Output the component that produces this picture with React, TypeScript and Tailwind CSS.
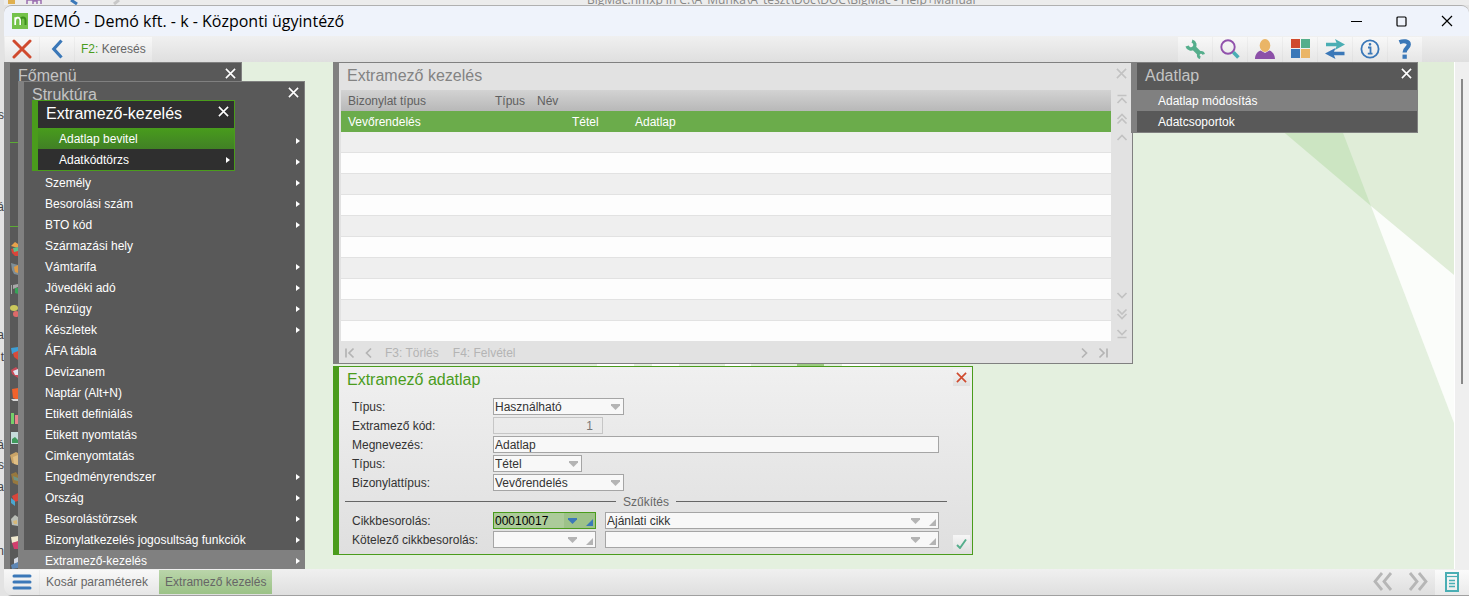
import type { ReactNode } from "react";

type MenuItem = { label: string; arrow?: boolean; active?: boolean };

const STRUCTURE_MENU: MenuItem[] = [
  { label: "Személy", arrow: true },
  { label: "Besorolási szám", arrow: true },
  { label: "BTO kód", arrow: true },
  { label: "Származási hely" },
  { label: "Vámtarifa", arrow: true },
  { label: "Jövedéki adó", arrow: true },
  { label: "Pénzügy", arrow: true },
  { label: "Készletek", arrow: true },
  { label: "ÁFA tábla" },
  { label: "Devizanem" },
  { label: "Naptár (Alt+N)" },
  { label: "Etikett definiálás" },
  { label: "Etikett nyomtatás" },
  { label: "Cimkenyomtatás" },
  { label: "Engedményrendszer", arrow: true },
  { label: "Ország", arrow: true },
  { label: "Besorolástörzsek", arrow: true },
  { label: "Bizonylatkezelés jogosultság funkciók", arrow: true },
  { label: "Extramező-kezelés", arrow: true, active: true },
];

// text of the document that lies behind the application window
const BEHIND_TEXT = [
  { y: 107, text: "s" },
  { y: 199, text: "á" },
  { y: 327, text: "a" },
  { y: 349, text: "t" },
  { y: 437, text: "á" },
  { y: 457, text: "s" },
  { y: 479, text: "a" },
  { y: 543, text: "n" },
];

function CrossIcon({ size = 11, width = 1.7 }: { size?: number; width?: number }) {
  return (
    <svg width={size} height={size} viewBox="0 0 12 12" fill="none" stroke="currentColor" strokeWidth={width}>
      <path d="M1 1L11 11M11 1L1 11" />
    </svg>
  );
}

function Arrow() {
  return (
    <svg width="4" height="6" viewBox="0 0 4 6" fill="#fff">
      <path d="M0 0L4 3L0 6Z" />
    </svg>
  );
}

function GhostButton({ label, d }: { label: string; d: string }) {
  return (
    <button type="button" aria-label={label} className="flex h-[19px] w-[19px] items-center justify-center">
      <svg width="12" height="12" viewBox="0 0 12 12" fill="none" stroke="currentColor" strokeWidth="1.7">
        <path d={d} />
      </svg>
    </button>
  );
}

function ToolButton({ label, children }: { label: string; children: ReactNode }) {
  return (
    <button
      type="button"
      aria-label={label}
      className="flex w-[34px] items-center justify-center bg-linear-to-b from-[#f8f8f8] to-[#e6e6e6] pb-0.5"
    >
      {children}
    </button>
  );
}

function MenuRow({ item, className }: { item: MenuItem; className: string }) {
  return (
    <button type="button" className={`flex h-[21px] w-full shrink-0 items-center text-left ${className}`}>
      <span className="flex-1 whitespace-nowrap">{item.label}</span>
      {item.arrow && <Arrow />}
    </button>
  );
}

function TitleBar() {
  return (
    <header className="flex h-[30px] shrink-0 items-center bg-[#eff3fb] pl-2">
      <svg width="16" height="16" viewBox="0 0 16 16" className="mr-[5px]">
        <rect width="16" height="16" fill="#74c24a" />
        <path d="M8.500 12V7.500C8.500 3.500 13.500 3.500 13.500 7.500V12" fill="none" stroke="#3c8f1c" strokeWidth="2" />
        <path d="M3.200 12V4.200M3.200 8C3.200 3.500 8.200 3.500 8.200 7.500V12" fill="none" stroke="#fff" strokeWidth="1.700" />
      </svg>
      <h1 className="flex-1 font-['Open_Sans','Noto_Sans',sans-serif] text-[16px] leading-6 text-black">
        DEMÓ - Demó kft. - k - Központi ügyintéző
      </h1>
      <div className="flex text-black">
        <button type="button" aria-label="Kis méret" className="flex h-[30px] w-[45px] items-center justify-center">
          <svg width="11" height="11" viewBox="0 0 11 11" stroke="currentColor">
            <path d="M0 5.500H11" />
          </svg>
        </button>
        <button type="button" aria-label="Teljes méret" className="flex h-[30px] w-[45px] items-center justify-center">
          <svg width="11" height="11" viewBox="0 0 11 11" fill="none" stroke="currentColor" strokeWidth="1.200">
            <rect x="1" y="1" width="9" height="9" rx="1" />
          </svg>
        </button>
        <button type="button" aria-label="Bezárás" className="flex h-[30px] w-[45px] items-center justify-center">
          <CrossIcon size={12} width={1.2} />
        </button>
      </div>
    </header>
  );
}

function Toolbar() {
  return (
    <div className="flex h-[26px] shrink-0 justify-between bg-linear-to-b from-[#f0f0f0] to-[#dfdfdf] pt-px pr-[47px]">
      <div className="flex gap-px pl-px">
        <ToolButton label="Kilépés">
          <svg width="20" height="20" viewBox="0 0 20 20" stroke="#d04a2e" strokeWidth="3" strokeLinecap="round">
            <path d="M2 2L18 18M18 2L2 18" />
          </svg>
        </ToolButton>
        <ToolButton label="Vissza">
          <svg width="12" height="20" viewBox="0 0 12 20" fill="none" stroke="#3b78b8" strokeWidth="3.200">
            <path d="M10.500 1.500L2.800 10L10.500 18.500" />
          </svg>
        </ToolButton>
        <button
          type="button"
          className="bg-linear-to-b from-[#f8f8f8] to-[#e6e6e6] px-1.5 pb-0.5 text-[#666]"
        >
          <span className="text-[#4a9c1c]">F2:</span> Keresés
        </button>
      </div>
      <div className="flex gap-px">
        <ToolButton label="Beállítások">
          <svg width="20" height="20" viewBox="0 0 20 20" fill="none" stroke="#55ae8c">
            <path d="M7 2.100A4 4 0 1 1 2.100 7" strokeWidth="3.400" />
            <path d="M8 8L14.500 14.500" strokeWidth="4.600" />
            <path d="M18.600 15.300A2.700 2.700 0 1 0 15.300 18.600" strokeWidth="2.800" />
          </svg>
        </ToolButton>
        <ToolButton label="Nagyító">
          <svg width="20" height="20" viewBox="0 0 20 20" fill="none">
            <circle cx="8" cy="8" r="6.700" stroke="#9152ac" strokeWidth="1.900" />
            <path d="M13.300 13.300L18.400 18.400" stroke="#4aaeb4" strokeWidth="3.600" />
          </svg>
        </ToolButton>
        <ToolButton label="Felhasználó">
          <svg width="20" height="20" viewBox="0 0 20 20">
            <path d="M0 20C0 15 3 12.500 5.500 11.500L10 14L14.500 11.500C17 12.500 20 15 20 20Z" fill="#8c50a8" />
            <ellipse cx="10" cy="6.500" rx="5.300" ry="6.500" fill="#eab566" />
          </svg>
        </ToolButton>
        <ToolButton label="Modulok">
          <svg width="19" height="19" viewBox="0 0 19 19">
            <rect width="9" height="9" fill="#d04a2e" />
            <rect x="10" width="9" height="9" fill="#55ae8c" />
            <rect y="10" width="9" height="9" fill="#3b78b8" />
            <rect x="10" y="10" width="9" height="9" fill="#eab566" />
          </svg>
        </ToolButton>
        <ToolButton label="Váltás">
          <svg width="20" height="20" viewBox="0 0 20 20">
            <path d="M1 3.800H11.500L10 0L20 5.500L10 11L11.500 7.200H1Z" fill="#4aaeb4" />
            <path d="M19.500 12.800H9L10.500 9L0 14.500L10.500 20L9 16.200H19.500Z" fill="#3b78b8" />
          </svg>
        </ToolButton>
        <ToolButton label="Információ">
          <svg width="20" height="20" viewBox="0 0 20 20" fill="none" stroke="#3b78b8">
            <circle cx="10" cy="10" r="8.600" strokeWidth="1.800" />
            <path d="M8 8.500H10.500V14.500M7.800 14.700H12.500" strokeWidth="1.800" />
            <circle cx="10" cy="5.300" r="0.700" strokeWidth="1.300" />
          </svg>
        </ToolButton>
        <ToolButton label="Súgó">
          <svg width="14" height="20" viewBox="0 0 14 20">
            <path
              d="M1.500 3.200C5.500 1.500 10.800 2 10.800 5.600C10.800 8.800 6.600 8.800 6.600 13.600"
              fill="none"
              stroke="#3b78b8"
              strokeWidth="4.200"
            />
            <rect x="4.500" y="15.600" width="4.300" height="4.200" fill="#3b78b8" />
          </svg>
        </ToolButton>
      </div>
    </div>
  );
}

function Backdrop() {
  return (
    <svg width="253" height="361" viewBox="0 0 253 361" className="absolute top-0 right-0">
      <path d="M115 0H253V213L170 144Z" fill="#e0edd8" />
      <path d="M0 0H115L170 144Z" fill="#cce5c2" />
      <path d="M170 144L253 213V361Z" fill="#fbfdfa" />
    </svg>
  );
}

function LogoEdge() {
  return (
    <svg width="284" height="2" viewBox="0 0 284 2" className="absolute top-[302px] left-[593px]">
      <path d="M0 0H37V2H0ZM55 0H82V2H55ZM128 0H154V2H128ZM245 0H283V2H245Z" fill="#fff" />
      <path d="M200 0H227V2H200Z" fill="#9bca80" />
    </svg>
  );
}

// left half of the module icons, the rest is covered by the next menu level
function ModuleIcons() {
  return (
    <svg width="8" height="507" viewBox="0 0 8 507">
      <path d="M0 79.500H8M0 163.500H8" stroke="#5cab35" />
      <path d="M1 183L5 179L8 181V185Z" fill="#e8a24c" />
      <path d="M1 186L8 184V193L5 193L2 190Z" fill="#d9453a" />
      <path d="M3 185L8 184V188L4 189Z" fill="#5fc08a" />
      <path d="M1 200L8 202V212L4 211L2 207Z" fill="#7f8f98" />
      <path d="M4 204L8 202V210L5 209Z" fill="#dd9a45" />
      <path d="M1 222H2V231H1ZM3 222L8 221V224L3 226Z" fill="#a8a8a8" />
      <path d="M5 225H8V231L5 230Z" fill="#37a357" />
      <ellipse cx="4" cy="245" rx="4" ry="3" fill="#cbc85c" />
      <ellipse cx="6" cy="251" rx="3" ry="3" fill="#dd6a6a" />
      <path d="M1 285L8 284V289L2 291Z" fill="#3d9fd6" />
      <path d="M3 290L8 288V297L4 294Z" fill="#d84b3a" />
      <path d="M1 307L6 304L8 306V315L2 311Z" fill="#c94a57" />
      <path d="M3 308L8 306V312L5 312Z" fill="#dfe4ee" />
      <path d="M2 326L8 325V337L3 335Z" fill="#f0622c" />
      <path d="M1 336H8V338H3Z" fill="#d8d8d8" />
      <path d="M1 350H4V361H1Z" fill="#74cf6a" />
      <path d="M5 352H8V361H5Z" fill="#e8848c" />
      <path d="M1 369H8V381H1Z" fill="#c7dcdc" />
      <path d="M2 376L5 374L8 377V380H2Z" fill="#3f9a5c" />
      <path d="M0 392L6 389L8 390V402L2 400Z" fill="#c9a468" />
      <path d="M3 394L8 392V402L4 401Z" fill="#e0bf84" />
      <path d="M1 411L6 409L8 412V422L3 420Z" fill="#97783e" />
      <path d="M3 413L8 415V418L4 417Z" fill="#6f9384" />
      <path d="M2 433L8 430V438L4 439Z" fill="#d9453a" />
      <path d="M1 435L5 438V443L1 440Z" fill="#4aa6d0" />
      <path d="M1 456L5 452L8 454V463L2 462Z" fill="#b9bdb6" />
      <path d="M3 458L7 457V461L4 461Z" fill="#d7b878" />
      <path d="M1 474L8 473V479L2 480Z" fill="#f1ead0" />
      <path d="M2 480L8 478V486H4Z" fill="#d23f6e" />
      <path d="M4 496L8 494V500L4 501Z" fill="#d5d9e2" />
      <path d="M1 502L8 499V505L2 506Z" fill="#5d86b5" />
    </svg>
  );
}

function WindowTitle({ title, color, crossColor = "text-white" }: { title: string; color: string; crossColor?: string }) {
  return (
    <div className="flex h-[27px] items-start justify-between pr-[5px] pl-2">
      <h2 className={`text-[16px] leading-[26px] ${color}`}>{title}</h2>
      <button type="button" aria-label={`${title} bezárása`} className={`mt-[5px] ${crossColor}`}>
        <CrossIcon />
      </button>
    </div>
  );
}

function MainMenu() {
  return (
    <section className="absolute top-0 bottom-0 left-0 w-[238px] overflow-hidden border-t border-r border-l-6 border-[#808080] bg-[#595959]">
      <WindowTitle title="Főmenü" color="text-[#c4c4c4]" />
      <div className="absolute top-0 left-0">
        <ModuleIcons />
      </div>
    </section>
  );
}

function StructureMenu() {
  return (
    <section className="absolute top-[19px] bottom-0 left-[14px] w-[287px] overflow-hidden border-t border-r border-l-6 border-[#808080] bg-[#595959] text-white">
      <WindowTitle title="Struktúra" color="text-[#c4c4c4]" />
      {/* the first rows lie under the open submenu */}
      <div className="flex h-[63px] flex-col items-end gap-[15px] pt-[29px] pr-1">
        <Arrow />
        <Arrow />
      </div>
      <nav>
        {STRUCTURE_MENU.map((item) => (
          <MenuRow
            key={item.label}
            item={item}
            className={item.active ? "bg-[#808080] pr-1 pl-[21px]" : "pr-1 pl-[21px]"}
          />
        ))}
      </nav>
    </section>
  );
}

function ExtraFieldMenu() {
  return (
    <section className="absolute top-[38px] left-[28px] w-[203px] border border-l-6 border-[#4a9c1c] bg-[#2f2f2f] text-white">
      <WindowTitle title="Extramező-kezelés" color="text-white" />
      <nav>
        <MenuRow item={{ label: "Adatlap bevitel" }} className="bg-linear-to-b from-[#489c1c] to-[#418025] pr-1 pl-[21px]" />
        <MenuRow item={{ label: "Adatkódtörzs", arrow: true }} className="pr-1 pl-[21px]" />
      </nav>
    </section>
  );
}

function SheetMenu() {
  return (
    <section className="absolute top-0 left-[1127px] w-[287px] border border-l-6 border-[#808080] bg-[#595959] text-white">
      <WindowTitle title="Adatlap" color="text-[#c4c4c4]" />
      <nav>
        <MenuRow item={{ label: "Adatlap módosítás" }} className="bg-[#808080] pl-[21px]" />
        <MenuRow item={{ label: "Adatcsoportok" }} className="pl-[21px]" />
      </nav>
    </section>
  );
}

function ListWindow() {
  return (
    <section className="absolute top-0 left-[329px] w-[800px] border border-l-6 border-[#808080] bg-[#e2e2e2]">
      <WindowTitle title="Extramező kezelés" color="text-[#838383]" crossColor="text-[#c2c2c2]" />
      <div className="flex pl-0.5">
        <table className="flex-1 table-fixed border-separate border-spacing-0 text-left">
          <colgroup>
            <col className="w-[147px]" />
            <col className="w-[42px]" />
            <col className="w-[35px]" />
            <col className="w-[63px]" />
            <col />
          </colgroup>
          <thead>
            <tr className="h-[21px] bg-linear-to-b from-[#d3d3d3] to-[#b8b8b8] text-[#606060]">
              <th className="py-0 pl-[7px] font-normal">Bizonylat típus</th>
              <th className="py-0 pl-[7px] font-normal">Típus</th>
              <th colSpan={3} className="py-0 pl-[7px] font-normal">
                Név
              </th>
            </tr>
          </thead>
          <tbody>
            <tr className="h-[21px] bg-[#6bac4b] text-white">
              <td colSpan={3} className="py-0 pl-[7px]">
                Vevőrendelés
              </td>
              <td className="py-0 pl-[7px]">Tétel</td>
              <td className="py-0 pl-[7px]">Adatlap</td>
            </tr>
            {Array.from({ length: 10 }, (_, i) => (
              <tr key={i} className="h-[21px] odd:bg-[#fdfdfd] even:bg-[#efefef]">
                <td colSpan={5} className="border-b border-[#e2e2e2] p-0" />
              </tr>
            ))}
          </tbody>
        </table>
        <div className="flex w-[21px] flex-col items-center justify-between text-[#c2c2c2]">
          <div className="flex flex-col">
            <GhostButton label="Első sor" d="M1.500 1.500H10.500M1.500 9L6 4.500L10.500 9" />
            <GhostButton label="Előző oldal" d="M1.500 6L6 1.500L10.500 6M1.500 10.500L6 6L10.500 10.500" />
            <GhostButton label="Előző sor" d="M1.500 8L6 3.500L10.500 8" />
          </div>
          <div className="flex flex-col">
            <GhostButton label="Következő sor" d="M1.500 4L6 8.500L10.500 4" />
            <GhostButton label="Következő oldal" d="M1.500 1.500L6 6L10.500 1.500M1.500 6L6 10.500L10.500 6" />
            <GhostButton label="Utolsó sor" d="M1.500 10.500H10.500M1.500 3L6 7.500L10.500 3" />
          </div>
        </div>
      </div>
      <div className="flex h-[21px] items-center pr-5 pl-px text-[#b4b4b4]">
        <GhostButton label="Eleje" d="M2 1.500V10.500M9.500 1.500L5 6L9.500 10.500" />
        <GhostButton label="Vissza" d="M8 1.500L3.500 6L8 10.500" />
        <button type="button" className="ml-[7px]">
          F3: Törlés
        </button>
        <button type="button" className="ml-3.5 flex-1 text-left">
          F4: Felvétel
        </button>
        <GhostButton label="Előre" d="M4 1.500L8.500 6L4 10.500" />
        <GhostButton label="Vége" d="M2.500 1.500L7 6L2.500 10.500M10 1.500V10.500" />
      </div>
    </section>
  );
}

const FIELD = "h-[17px] border border-[#a5a5a5] bg-[#f8f8f8] pt-px pl-px text-[#333]";

function Triangle({ className = "text-[#b4b4b4]" }: { className?: string }) {
  return (
    <svg width="9" height="6" viewBox="0 0 9 6" fill="currentColor" className={className}>
      <path d="M0 0H9V1.500L4.500 6L0 1.500Z" />
    </svg>
  );
}

function Corner({ className = "text-[#b4b4b4]" }: { className?: string }) {
  return (
    <svg width="7" height="7" viewBox="0 0 7 7" fill="currentColor" className={className}>
      <path d="M7 0V7H0Z" />
    </svg>
  );
}

function FormRow({ id, label, children }: { id: string; label: string; children: ReactNode }) {
  return (
    <div className="flex h-[19px] items-start">
      <label htmlFor={id} className="w-[141px] leading-[19px] whitespace-nowrap text-[#333]">
        {label}
      </label>
      {children}
    </div>
  );
}

function SelectField({ id, options, className }: { id: string; options: string[]; className: string }) {
  return (
    <div className={`relative ${className}`}>
      <select id={id} className={`block w-full appearance-none leading-[15px] ${FIELD}`}>
        {options.map((option) => (
          <option key={option}>{option}</option>
        ))}
      </select>
      <span className="pointer-events-none absolute top-1.5 right-1">
        <Triangle />
      </span>
    </div>
  );
}

function LookupField({
  id,
  label,
  value,
  active,
  className,
}: {
  id: string;
  label?: string;
  value: string;
  active?: boolean;
  className: string;
}) {
  return (
    <div
      className={`flex h-[17px] border pl-px ${className} ${
        active ? "border-[#4a9c1c] bg-[#accb9a] text-black" : "border-[#a5a5a5] bg-[#f8f8f8] text-[#333]"
      }`}
    >
      <input id={id} aria-label={label} defaultValue={value} className="min-w-0 flex-1 pt-px leading-[15px] outline-none" />
      <div className={`flex w-[31px] items-center justify-between pr-0.5 pl-1 ${active ? "bg-[#9dc289]" : ""}`}>
        <button type="button" aria-label="Lista">
          <Triangle className={active ? "text-[#3b78b8]" : "text-[#b4b4b4]"} />
        </button>
        <button type="button" aria-label="Keresés" className="pt-1">
          <Corner className={active ? "text-[#3b78b8]" : "text-[#b4b4b4]"} />
        </button>
      </div>
    </div>
  );
}

function SheetWindow() {
  return (
    <section className="absolute top-[304px] left-[329px] flex h-[189px] w-[640px] border border-l-6 border-[#4a9c1c] bg-linear-to-b from-[#f0f0f0] to-[#dfdfdf]">
      <form className="w-[608px] pl-1.5">
        <h2 className="h-[31px] pl-0.5 text-[16px] leading-[26px] text-[#4a9c1c]">Extramező adatlap</h2>
        <div className="pl-[7px]">
          <FormRow id="usage" label="Típus:">
            <SelectField id="usage" options={["Használható", "Kötelező"]} className="w-[131px]" />
          </FormRow>
          <FormRow id="code" label="Extramező kód:">
            <input
              id="code"
              defaultValue="1"
              readOnly
              className="h-[17px] w-[110px] border border-[#c6c6c6] pt-px pr-[9px] text-right text-[#777]"
            />
          </FormRow>
          <FormRow id="name" label="Megnevezés:">
            <input id="name" defaultValue="Adatlap" className={`w-[446px] ${FIELD}`} />
          </FormRow>
          <FormRow id="level" label="Típus:">
            <SelectField id="level" options={["Tétel", "Fej"]} className="w-[89px]" />
          </FormRow>
          <FormRow id="document" label="Bizonylattípus:">
            <SelectField id="document" options={["Vevőrendelés", "Számla"]} className="w-[131px]" />
          </FormRow>
        </div>
        <div className="flex h-[19px] items-start gap-[7px] leading-[19px] text-[#666]">
          <hr className="mt-2 flex-1 border-[#666]" />
          Szűkítés
          <hr className="mt-2 flex-1 border-[#666]" />
        </div>
        <div className="pl-[7px]">
          <FormRow id="item" label="Cikkbesorolás:">
            <LookupField id="item" value="00010017" active className="w-[103px]" />
            <LookupField id="item-name" label="Cikkbesorolás neve" value="Ajánlati cikk" className="ml-[9px] w-[334px]" />
          </FormRow>
          <FormRow id="required" label="Kötelező cikkbesorolás:">
            <LookupField id="required" value="" className="w-[103px]" />
            <LookupField
              id="required-name"
              label="Kötelező cikkbesorolás neve"
              value=""
              className="ml-[9px] w-[334px]"
            />
          </FormRow>
        </div>
      </form>
      <div className="flex flex-1 flex-col items-end justify-between py-0.5 pr-0.5">
        <button
          type="button"
          aria-label="Adatlap elvetése"
          className="flex h-[17px] w-[17px] items-center justify-center bg-linear-to-b from-[#f6f6f6] to-[#e0e0e0] text-[#d04a2e]"
        >
          <CrossIcon width={1.8} />
        </button>
        <button
          type="button"
          aria-label="Mentés"
          className="flex h-[17px] w-[17px] items-center justify-center bg-linear-to-b from-[#f6f6f6] to-[#e0e0e0]"
        >
          <svg width="11" height="10" viewBox="0 0 11 10" fill="none" stroke="#55ae8c" strokeWidth="1.900">
            <path d="M1 6L4 9L10 0.500" />
          </svg>
        </button>
      </div>
    </section>
  );
}

function StatusBar() {
  return (
    <footer className="flex h-[27px] shrink-0 items-stretch border-b border-[#a0a0a0] bg-linear-to-b from-[#f0f0f0] to-[#dfdfdf] pt-px text-[#666]">
      <button
        type="button"
        aria-label="Menü"
        className="flex w-[35px] items-center justify-center rounded-bl-lg bg-linear-to-b from-[#f8f8f8] to-[#e6e6e6] pb-0.5"
      >
        <svg width="20" height="16" viewBox="0 0 20 16" stroke="#3b78b8" strokeWidth="3" strokeLinecap="round">
          <path d="M2 2H18M2 8H18M2 14H18" />
        </svg>
      </button>
      <button type="button" className="ml-px bg-linear-to-b from-[#f8f8f8] to-[#e6e6e6] pr-[11px] pb-0.5 pl-1.5">
        Kosár paraméterek
      </button>
      <button type="button" className="mb-px bg-linear-to-b from-[#bad5aa] to-[#9bc286] px-1.5">
        Extramező kezelés
      </button>
      <div className="flex flex-1 justify-end text-[#b6b6b6]">
        {["M9 1L2 9.500L9 18M18 1L11 9.500L18 18", "M2 1L9 9.500L2 18M11 1L18 9.500L11 18"].map((d, i) => (
          <button
            key={d}
            type="button"
            aria-label={i === 0 ? "Előző ablak" : "Következő ablak"}
            className="flex w-[35px] items-center justify-center pb-0.5"
          >
            <svg width="20" height="19" viewBox="0 0 20 19" fill="none" stroke="currentColor" strokeWidth="2.800">
              <path d={d} />
            </svg>
          </button>
        ))}
      </div>
      <button
        type="button"
        aria-label="Ablaklista"
        className="flex w-[34px] items-center justify-center bg-linear-to-b from-[#fbfbfb] to-[#eaeaea] pb-0.5"
      >
        <svg width="14" height="20" viewBox="0 0 14 20" fill="none" stroke="#4aaeb4">
          <rect x="1" y="1" width="12" height="18" strokeWidth="2" />
          <path d="M2 4.500H12" strokeWidth="1.200" />
          <path d="M4 8.500H10M4 11.500H10M4 14.500H10" strokeWidth="1.400" />
        </svg>
      </button>
    </footer>
  );
}

export default function App() {
  return (
    <div className="relative flex h-screen flex-col overflow-hidden bg-[#e3e3e3] pl-1 font-['Liberation_Sans',Arial,sans-serif] text-[12px] leading-4">
      <div className="relative h-[5px] shrink-0 overflow-hidden bg-[#ececec]">
        <p className="absolute bottom-0 left-[583px] font-['Open_Sans','Noto_Sans',sans-serif] text-[12px] leading-[10px] whitespace-nowrap text-[#888]">
          BigMac.hmxp in C:\A_Munka\A_teszt\Doc\DOC\BigMac - Help+Manual
        </p>
        <svg width="130" height="5" viewBox="0 0 130 5" className="absolute top-0 left-0">
          <path d="M4 0H11V4H4Z" fill="#e0b050" />
          <path d="M23 4V0H37V4M29 4V1H33V4" fill="none" stroke="#9a6fb0" strokeWidth="1.500" />
          <path d="M67 0L73 4" fill="none" stroke="#3b78b8" strokeWidth="3" />
          <path d="M115 0L110 4" fill="none" stroke="#c8c8c8" strokeWidth="3" />
        </svg>
      </div>
      <div className="absolute inset-y-0 left-0 w-1 overflow-hidden text-[#444]">
        {BEHIND_TEXT.map(({ y, text }) => (
          <span key={y} className="absolute right-0" style={{ top: y }}>
            {text}
          </span>
        ))}
      </div>
      <div className="flex min-h-0 flex-1 flex-col overflow-hidden rounded-t-lg rounded-bl-lg border-t border-[#b0b0b0]">
        <TitleBar />
        <Toolbar />
        <main className="flex min-h-0 flex-1">
          <div className="relative flex-1 overflow-hidden border-r border-white bg-[#e4f0df]">
            <Backdrop />
            <LogoEdge />
            <MainMenu />
            <StructureMenu />
            <ExtraFieldMenu />
            <ListWindow />
            <SheetMenu />
            <SheetWindow />
          </div>
          <div className="flex w-[14px] justify-center bg-[#efefef] pt-[17px]">
            <div className="h-[305px] w-0.5 bg-[#888]" />
          </div>
        </main>
        <StatusBar />
      </div>
    </div>
  );
}
